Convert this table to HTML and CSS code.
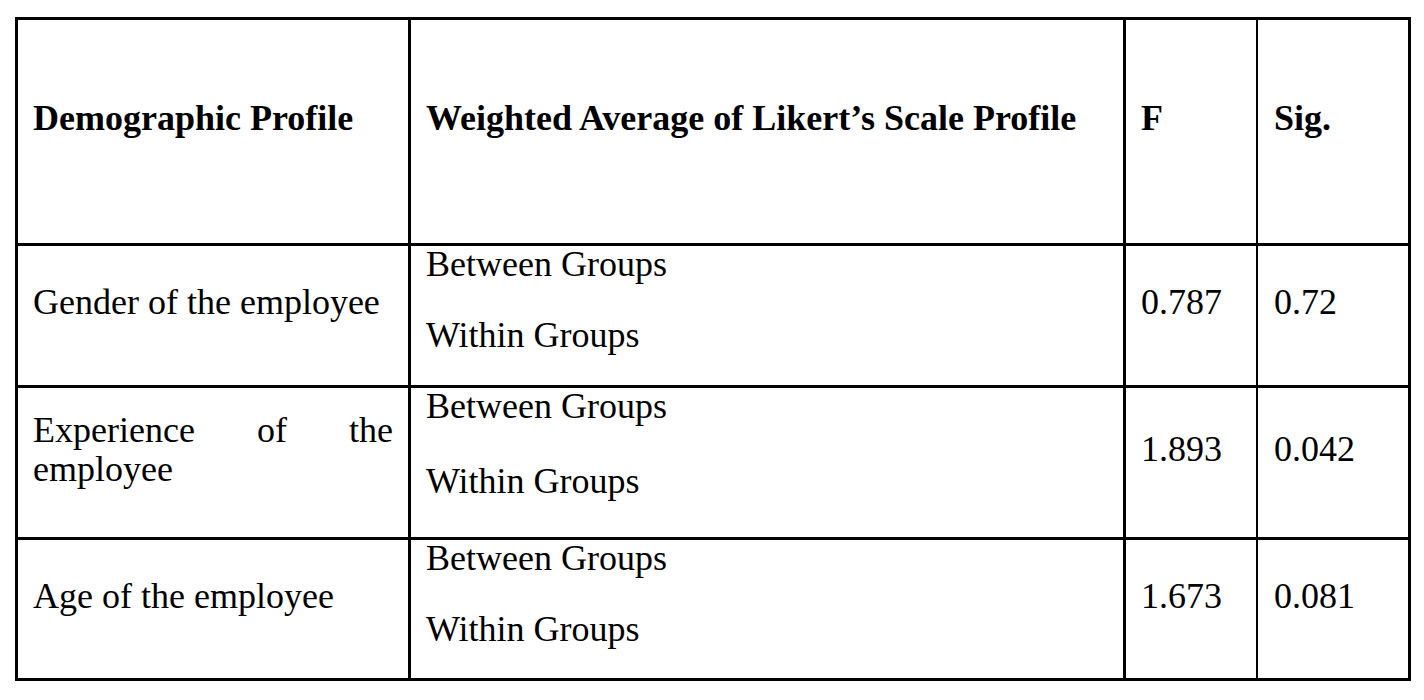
FILE: index.html
```html
<!DOCTYPE html>
<html lang="en">
<head>
<meta charset="utf-8">
<title>ANOVA by Demographic Profile</title>
<link rel="stylesheet" href="styles.css">
</head>
<body>
<div class="table" role="table">
  <div class="cell head" role="columnheader"><p>Demographic Profile</p></div>
  <div class="cell head" role="columnheader"><p>Weighted Average of Likert’s Scale Profile</p></div>
  <div class="cell head" role="columnheader"><p>F</p></div>
  <div class="cell head sig" role="columnheader"><p>Sig.</p></div>

  <div class="cell" role="cell"><p>Gender of the employee</p></div>
  <div class="cell groups" role="cell"><p>Between Groups</p><p class="within">Within Groups</p></div>
  <div class="cell" role="cell"><p>0.787</p></div>
  <div class="cell sig" role="cell"><p>0.72</p></div>

  <div class="cell" role="cell"><p>Experience of the employee</p></div>
  <div class="cell groups tall" role="cell"><p>Between Groups</p><p class="within">Within Groups</p></div>
  <div class="cell" role="cell"><p>1.893</p></div>
  <div class="cell sig" role="cell"><p>0.042</p></div>

  <div class="cell" role="cell"><p>Age of the employee</p></div>
  <div class="cell groups" role="cell"><p>Between Groups</p><p class="within">Within Groups</p></div>
  <div class="cell" role="cell"><p>1.673</p></div>
  <div class="cell sig" role="cell"><p>0.081</p></div>
</div>
</body>
</html>
```

FILE: styles.css
```css
html, body {
  background: #ffffff;
}

body {
  margin: 17px 0 0 15px;
  font-family: "Liberation Serif", "Times New Roman", serif;
  color: #000000;
}

.table {
  display: grid;
  grid-template-columns: 390px 712px 130px 149px;
  grid-template-rows: 223px 139px 149px 138px;
  gap: 3px;
  width: max-content;
  background: #000000;
  border: 3px solid #000000;
}

.cell {
  background: #ffffff;
  display: flex;
  flex-direction: column;
  justify-content: center;
  padding: 0 15px 26px 15px;
  font-size: 36px;
  line-height: 39px;
}

.cell p {
  margin: 0;
  text-align: justify;
}

.sig {
  margin-left: -1px;
  padding-left: 16px;
}

.head {
  font-weight: bold;
}

.groups {
  justify-content: flex-start;
  padding: 0 15px;
  line-height: 36px;
}

.groups .within {
  margin-top: 35px;
}

.groups.tall .within {
  margin-top: 39px;
}
```
